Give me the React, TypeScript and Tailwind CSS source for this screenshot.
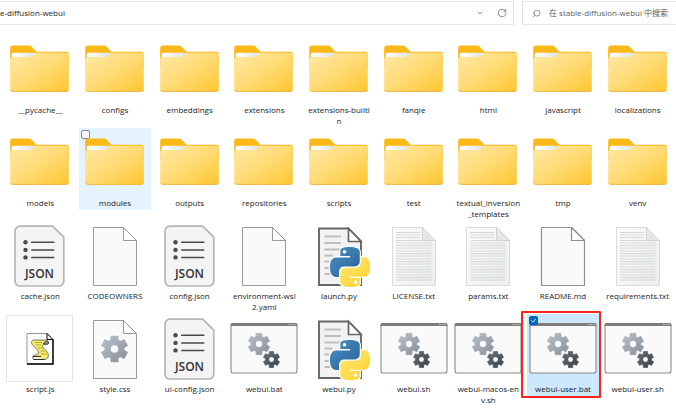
import { useState } from 'react';
import { ChevronDown, RotateCw, Search } from 'lucide-react';
import clsx from 'clsx';

type Kind = 'folder' | 'json' | 'blank' | 'markdown' | 'python' | 'text' | 'script' | 'css' | 'batch';

interface Entry {
  name: string;
  kind: Kind;
  // long names wrap mid-word, one entry per line
  lines?: string[];
}

const ENTRIES: Entry[] = [
  { name: '__pycache__', kind: 'folder' },
  { name: 'configs', kind: 'folder' },
  { name: 'embeddings', kind: 'folder' },
  { name: 'extensions', kind: 'folder' },
  { name: 'extensions-builtin', kind: 'folder', lines: ['extensions-builti', 'n'] },
  { name: 'fanqie', kind: 'folder' },
  { name: 'html', kind: 'folder' },
  { name: 'javascript', kind: 'folder' },
  { name: 'localizations', kind: 'folder' },
  { name: 'models', kind: 'folder' },
  { name: 'modules', kind: 'folder' },
  { name: 'outputs', kind: 'folder' },
  { name: 'repositories', kind: 'folder' },
  { name: 'scripts', kind: 'folder' },
  { name: 'test', kind: 'folder' },
  { name: 'textual_inversion_templates', kind: 'folder', lines: ['textual_inversion', '_templates'] },
  { name: 'tmp', kind: 'folder' },
  { name: 'venv', kind: 'folder' },
  { name: 'cache.json', kind: 'json' },
  { name: 'CODEOWNERS', kind: 'blank' },
  { name: 'config.json', kind: 'json' },
  { name: 'environment-wsl2.yaml', kind: 'blank', lines: ['environment-wsl', '2.yaml'] },
  { name: 'launch.py', kind: 'python' },
  { name: 'LICENSE.txt', kind: 'text' },
  { name: 'params.txt', kind: 'text' },
  { name: 'README.md', kind: 'markdown' },
  { name: 'requirements.txt', kind: 'text' },
  { name: 'script.js', kind: 'script' },
  { name: 'style.css', kind: 'css' },
  { name: 'ui-config.json', kind: 'json' },
  { name: 'webui.bat', kind: 'batch' },
  { name: 'webui.py', kind: 'python' },
  { name: 'webui.sh', kind: 'batch' },
  { name: 'webui-macos-env.sh', kind: 'batch', lines: ['webui-macos-en', 'v.sh'] },
  { name: 'webui-user.bat', kind: 'batch' },
  { name: 'webui-user.sh', kind: 'batch' },
];

export default function App() {
  const [selected, setSelected] = useState<string[]>(['webui-user.bat']);

  const toggle = (name: string) => {
    setSelected((prev) => (prev.includes(name) ? prev.filter((n) => n !== name) : [...prev, name]));
  };

  return (
    <div className="min-h-screen overflow-hidden bg-white font-['Open_Sans','Noto_Sans_CJK_SC',sans-serif] text-[#1b1b1b]">
      <IconDefs />
      <TopBar />
      <ul className="grid auto-rows-[93px] grid-cols-9 pt-[10px] pr-px pl-[3px]">
        {ENTRIES.map((e) => (
          <FileTile
            key={e.name}
            entry={e}
            hovered={e.name === 'modules'}
            selected={selected.includes(e.name)}
            marked={e.name === 'webui-user.bat'}
            onToggle={() => toggle(e.name)}
          />
        ))}
      </ul>
    </div>
  );
}

// ── Address bar and search ──────────────────────────────────────────────────

function TopBar() {
  return (
    <header className="flex gap-2 pt-px">
      <div className="flex h-6 flex-1 items-center border-t border-r border-b border-[#e2e2e2] border-b-[#e8e8e8] pr-[6px]">
        <span className="flex-1 text-[8px] leading-3">e-diffusion-webui</span>
        <button type="button" aria-label="Recent locations" className="mr-[13px] text-[#777]">
          <ChevronDown className="size-2" strokeWidth={2.5} />
        </button>
        <button type="button" aria-label="Refresh" className="text-[#777]">
          <RotateCw className="size-[10px]" strokeWidth={2} />
        </button>
      </div>
      <label className="flex h-6 w-[154px] items-center gap-2 border-t border-b border-l border-[#e2e2e2] border-b-[#e8e8e8] pl-[9px]">
        <Search className="size-[9px] shrink-0 -scale-x-100 text-[#777]" strokeWidth={2} />
        <input
          type="text"
          aria-label="Search"
          placeholder="在 stable-diffusion-webui 中搜索"
          className="w-full min-w-0 text-[8px] leading-3 outline-none placeholder:text-[#5c5c5c]"
        />
      </label>
    </header>
  );
}

// ── Tiles ───────────────────────────────────────────────────────────────────

interface TileProps {
  entry: Entry;
  hovered: boolean;
  selected: boolean;
  marked: boolean;
  onToggle: () => void;
}

function FileTile({ entry, hovered, selected, marked, onToggle }: TileProps) {
  const { name, kind, lines = [name] } = entry;
  return (
    <li className="relative px-px">
      <label
        className={clsx(
          'group flex min-h-[82px] flex-col items-center pt-[2px]',
          hovered && 'bg-[#e5f3ff]',
          selected && 'bg-[#cce8ff]',
        )}
      >
        <FileIcon kind={kind} />
        <span className="mt-px text-center text-[8px] leading-[11px]">
          {lines.map((l) => (
            <span key={l} className="block whitespace-nowrap">
              {l}
            </span>
          ))}
        </span>
        <input
          type="checkbox"
          checked={selected}
          onChange={onToggle}
          aria-label={name}
          className={clsx(
            'absolute top-[2px] left-[3px] size-[9px] appearance-none rounded-[2px] border border-[#8a8a8a] bg-[#f6f6f6] checked:border-[#0067c0] checked:bg-[#0067c0]',
            !hovered && !selected && 'opacity-0 group-hover:opacity-100',
          )}
        />
        {selected && (
          <svg viewBox="0 0 9 9" className="pointer-events-none absolute top-[2px] left-[3px] size-[9px]">
            <path d="M2.3 4.6 3.9 6.1 6.8 3.1" fill="none" stroke="#fff" strokeWidth="0.9" />
          </svg>
        )}
      </label>
      {marked && (
        <div className="pointer-events-none absolute -top-[3px] -right-px -left-[5px] h-[87px] rounded-[1px] border-2 border-[#fa2320]" />
      )}
    </li>
  );
}

// ── Icons (all on a 66x66 canvas) ───────────────────────────────────────────

function IconDefs() {
  return (
    <svg className="absolute size-0" aria-hidden="true">
      <defs>
        <linearGradient id="folderFront" x1="0" y1="0" x2="1" y2="1">
          <stop offset="0" stopColor="#ffe9a6" />
          <stop offset="0.5" stopColor="#ffdb75" />
          <stop offset="1" stopColor="#ffc52f" />
        </linearGradient>
        <linearGradient id="folderPaper" x1="0" y1="0" x2="1" y2="0">
          <stop offset="0" stopColor="#ffffff" />
          <stop offset="1" stopColor="#dfe3e3" />
        </linearGradient>
        <linearGradient id="textPage" x1="0" y1="0" x2="1" y2="1">
          <stop offset="0" stopColor="#fbfbfb" />
          <stop offset="1" stopColor="#eceeef" />
        </linearGradient>
        <linearGradient id="gearLight" x1="0" y1="0" x2="1" y2="1">
          <stop offset="0" stopColor="#b8c0c8" />
          <stop offset="1" stopColor="#87909a" />
        </linearGradient>
        <linearGradient id="gearDark" x1="0" y1="0" x2="1" y2="1">
          <stop offset="0" stopColor="#66717a" />
          <stop offset="1" stopColor="#3a4146" />
        </linearGradient>
        <linearGradient id="pyBlue" x1="0" y1="0" x2="1" y2="1">
          <stop offset="0" stopColor="#4a92cb" />
          <stop offset="1" stopColor="#2a5f8f" />
        </linearGradient>
        <linearGradient id="pyYellow" x1="1" y1="1" x2="0" y2="0">
          <stop offset="0" stopColor="#ffe873" />
          <stop offset="1" stopColor="#ffd02e" />
        </linearGradient>
      </defs>
    </svg>
  );
}

function FileIcon({ kind }: { kind: Kind }) {
  return (
    <svg viewBox="0 0 66 66" className="size-[66px] shrink-0 overflow-visible" aria-hidden="true">
      {kind === 'folder' && <FolderArt />}
      {kind === 'json' && <JsonArt />}
      {kind === 'blank' && <PageArt stroke="#8f8f8f" />}
      {kind === 'markdown' && <PageArt stroke="#8f8f8f" width={1.2} />}
      {kind === 'python' && <PythonArt />}
      {kind === 'text' && <TextArt />}
      {kind === 'script' && <ScriptArt />}
      {kind === 'css' && (
        <>
          <PageArt stroke="#8f8f8f" />
          <Gear cx={32.5} cy={33} r={13.5} fill="url(#gearLight)" />
        </>
      )}
      {kind === 'batch' && <BatchArt />}
    </svg>
  );
}

function FolderArt() {
  return (
    <>
      <path d="M3.2 21V11a2.6 2.6 0 0 1 2.6-2.6h15.4c2 0 3 .6 4.2 2l4 4.400h30a2.400 2.400 0 0 1 2.400 2.400V30H3.200z" fill="#fbb917" />
      <path d="M4.800 24v-6.700a1.500 1.500 0 0 1 1.500-1.500H29.500c-1.500 3-3.200 5-6 5z" fill="url(#folderPaper)" />
      <path
        d="M3.200 22.500a2.400 2.400 0 0 1 2.400-2.400H20.500c3 0 4.800-.8 6.500-2.700 1-1.100 1.800-1.600 3.400-1.600h29.200a2.200 2.200 0 0 1 2.200 2.200v34.300a2.400 2.400 0 0 1-2.400 2.400H5.600a2.400 2.400 0 0 1-2.400-2.400z"
        fill="url(#folderFront)"
      />
      <path d="M3.500 53a2.300 2.300 0 0 0 2.200 1.400h53.800a2.300 2.300 0 0 0 2.200-1.400" fill="none" stroke="#eeb23c" strokeWidth="0.9" />
    </>
  );
}

function PageArt({ stroke, width = 0.9 }: { stroke: string; width?: number }) {
  return (
    <g stroke={stroke} strokeWidth={width} strokeLinejoin="round">
      <path d="M11.500 4.500h30l13 13v45h-43z" fill="#fafafa" />
      <path d="M41.500 4.500v13h13z" fill="#fff" />
    </g>
  );
}

function JsonArt() {
  return (
    <>
      <path
        d="M13 3.200h32.600L56.800 14.200V58a5 5 0 0 1-5 5H13a5 5 0 0 1-5-5V8.200a5 5 0 0 1 5-5z"
        fill="#f4f4f4"
        stroke="#b5b5b5"
        strokeWidth="1.700"
        strokeLinejoin="round"
      />
      {[19.3, 26.9, 34.4].map((y) => (
        <g key={y} fill="#4a4a4a">
          <circle cx="18.500" cy={y} r="2.200" />
          <rect x="24" y={y - 0.7} width="23.500" height="1.500" rx="0.700" />
        </g>
      ))}
      <text x="32.500" y="55" textAnchor="middle" fill="#333" className="font-['Open_Sans',sans-serif] text-[12px] font-semibold">
        JSON
      </text>
    </>
  );
}

function TextArt() {
  const rows = [9.5, 12, 14.5, 17.5, 20, 22.5, 25, 28, 30.5, 33, 36, 38.5, 41, 44, 46.5, 49, 52, 54.5, 57];
  return (
    <>
      <path d="M11.500 4.500h30l13 13v45h-43z" fill="url(#textPage)" stroke="#d6d8d9" strokeWidth="0.900" />
      <path
        d={rows.map((y) => `M15 ${y}h${y < 17 ? 24 : 35.5}`).join('')}
        stroke="#cdd0d2"
        strokeWidth="0.800"
      />
      <path d="M41.500 4.500v13h13z" fill="#e4e6e7" stroke="#c8cbcd" strokeWidth="0.800" strokeLinejoin="round" />
    </>
  );
}

const PY_PATH =
  'M14.25.18l.9.2.73.26.59.3.45.32.34.34.25.34.16.33.1.3.04.26.02.2-.01.13V8.5l-.05.63-.13.55-.21.46-.26.38-.3.31-.33.25-.35.19-.35.14-.33.1-.3.07-.26.04-.21.02H8.77l-.69.05-.59.14-.5.22-.41.27-.33.32-.27.35-.2.36-.15.37-.1.35-.07.32-.04.27-.02.21v3.06H3.17l-.21-.03-.28-.07-.32-.12-.35-.18-.36-.26-.36-.36-.35-.46-.32-.59-.28-.73-.21-.88-.14-1.05-.05-1.23.06-1.22.16-1.04.24-.87.32-.71.36-.57.4-.44.42-.33.42-.24.4-.16.36-.1.32-.05.24-.01h.16l.06.01h8.16v-.83H6.18l-.01-2.75-.02-.37.05-.34.11-.31.17-.28.25-.26.31-.23.38-.2.44-.18.51-.15.58-.12.64-.1.71-.06.77-.04.84-.02 1.27.05zm-6.3 1.98l-.23.33-.08.41.08.41.23.34.33.22.41.09.41-.09.33-.22.23-.34.08-.41-.08-.41-.23-.33-.33-.22-.41-.09-.41.09z';

function PythonArt() {
  return (
    <>
      <path d="M13 5.500h29.500l12.500 13v43.500H13z" fill="#f2f2f2" stroke="#666" strokeWidth="1.900" />
      <path d="M42.500 5.500v13H55z" fill="#fff" stroke="#666" strokeWidth="1.700" />
      <path d="M18.500 13.500h16.500M18.500 20h16.500M18.500 26.500h16.500M18.500 32.500h8M18.500 38.500h5M18.500 45h5M18.500 51h6" stroke="#bdbdbd" strokeWidth="1.900" />
      <g transform="translate(24 24) scale(1.67)">
        <path d={PY_PATH} fill="#fff" stroke="#fff" strokeWidth="1.400" />
        <path d={PY_PATH} transform="rotate(180 12 12)" fill="#fff" stroke="#fff" strokeWidth="1.400" />
        <circle cx="9" cy="3" r="1.500" fill="#fff" />
        <path d={PY_PATH} fill="url(#pyBlue)" />
        <path d={PY_PATH} transform="rotate(180 12 12)" fill="url(#pyYellow)" />
      </g>
    </>
  );
}

function ScriptArt() {
  return (
    <>
      <rect x="-0.500" y="-0.500" width="66" height="66" fill="#fff" stroke="#e6e6e6" />
      <path d="M20 17.500h20l6 6V48H20z" fill="#fff" stroke="#888" strokeWidth="0.900" />
      <path d="M46 23.500V48H20" fill="none" stroke="#000" strokeWidth="1.400" />
      <path d="M40 17.500v6h6z" fill="#fff" stroke="#000" strokeWidth="1" />
      <path
        d="M26.500 24c-2.500.5-2.500 3.500-.5 5.500 2.500 2.500 6 5 5.500 7.500-.3 1.600-1.500 2-3.500 2-2.500 0-3.500 4.500-.5 4.500h10c3.500 0 4.500-3.500 3.500-6-1.200-3-6-5.500-5.500-8 .3-1.500 2.500-1.500 4.500-1.500 2.500 0 1.500-4-1-4z"
        fill="#f3ea6c"
        stroke="#555"
        strokeWidth="0.800"
      />
      <path d="M36.500 28c.5-2.500 4-4 5-1.500.5 1.500-1 2-5 1.500z" fill="#999" stroke="#222" strokeWidth="0.800" />
      <path d="M28 26.500h7M28.500 29h5.500M31 32h5M33.500 35h5M34 38h5.500" stroke="#a89d28" strokeWidth="0.800" />
      <path d="M26 40.500h8M26.500 43.500h11" stroke="#222" strokeWidth="0.900" />
      <path d="M27 42h7" stroke="#fff" strokeWidth="1.400" />
    </>
  );
}

// six teeth, each one a trapezoid that narrows towards its tip
function gearPath(r: number) {
  const pts: string[] = [];
  for (let i = 0; i < 6; i++) {
    const corners = [[-22, 0.7], [-15, 0.98], [15, 0.98], [22, 0.7]];
    for (const [offset, k] of corners) {
      const a = ((i * 60 - 90 + offset) * Math.PI) / 180;
      pts.push(`${(Math.cos(a) * r * k).toFixed(2)} ${(Math.sin(a) * r * k).toFixed(2)}`);
    }
  }
  return `M${pts.join('L')}Z`;
}

function Gear({ cx, cy, r, fill }: { cx: number; cy: number; r: number; fill: string }) {
  return (
    <g transform={`translate(${cx} ${cy})`}>
      <path d={gearPath(r)} fill={fill} stroke={fill} strokeWidth={r * 0.08} strokeLinejoin="round" />
      <circle r={r * 0.28} fill="#fafafa" />
    </g>
  );
}

function BatchArt() {
  return (
    <>
      <rect x="0" y="7.500" width="66" height="49.500" rx="2" fill="#fafafa" stroke="#8a8a87" strokeWidth="1.100" />
      <path d="M-.5 10V9a2 2 0 0 1 2-2h63a2 2 0 0 1 2 2v1z" fill="#7d7d79" />
      <path d="M58 8.500h1.500M60.500 8.500h1.500M63 8.500h1.500" stroke="#c9c9c6" strokeWidth="1" />
      <Gear cx={28} cy={28} r={11.2} fill="url(#gearLight)" />
      <Gear cx={40.5} cy={43.5} r={8.5} fill="url(#gearDark)" />
    </>
  );
}
